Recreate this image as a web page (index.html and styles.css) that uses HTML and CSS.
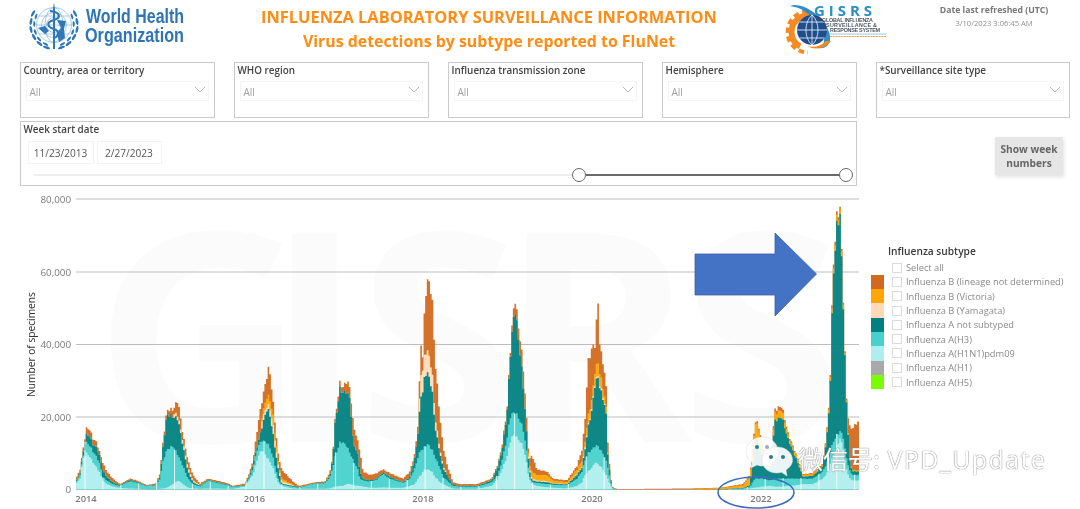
FILE: index.html
```html
<!DOCTYPE html>
<html lang="en">
<head>
<meta charset="utf-8">
<title>Influenza Laboratory Surveillance Information</title>
<link rel="stylesheet" href="styles.css">
</head>
<body>
<div class="page">
  <header class="header">
    <div class="who">
      <svg class="who-logo" width="172" height="52" viewBox="0 0 172 52">
        <g class="who-mark">
          <g id="wreath">
            <ellipse cx="18.5" cy="46.5" rx="1.3" ry="3.6" transform="rotate(-70 18.5 46.5)"/>
            <ellipse cx="11.5" cy="42.5" rx="1.3" ry="3.6" transform="rotate(-50 11.5 42.5)"/>
            <ellipse cx="6" cy="36" rx="1.3" ry="3.6" transform="rotate(-30 6 36)"/>
            <ellipse cx="3" cy="28.5" rx="1.3" ry="3.6" transform="rotate(-10 3 28.5)"/>
            <ellipse cx="3" cy="20.5" rx="1.3" ry="3.6" transform="rotate(10 3 20.5)"/>
            <ellipse cx="5" cy="12.5" rx="1.3" ry="3.6" transform="rotate(28 5 12.5)"/>
            <ellipse cx="17.5" cy="43" rx="1.1" ry="3" transform="rotate(-60 17.5 43)"/>
            <ellipse cx="11" cy="38" rx="1.1" ry="3" transform="rotate(-42 11 38)"/>
            <ellipse cx="7.3" cy="31" rx="1.1" ry="3" transform="rotate(-20 7.3 31)"/>
            <ellipse cx="6.3" cy="23" rx="1.1" ry="3" transform="rotate(0 6.3 23)"/>
            <ellipse cx="8" cy="15.5" rx="1.1" ry="3" transform="rotate(18 8 15.5)"/>
          </g>
          <use href="#wreath" transform="translate(52 0) scale(-1 1)"/>
          <g class="who-globe">
            <circle cx="26" cy="24" r="17.5"/>
            <circle cx="26" cy="24" r="12.5"/>
            <circle cx="26" cy="24" r="7.5"/>
            <ellipse cx="26" cy="24" rx="9" ry="17.5"/>
            <path d="M8.5 24H43.5M11 15H41M11 33H41"/>
          </g>
          <path d="M26 1.5L27 8V48H25V8Z"/>
          <path class="who-snake" d="M22 10C33 11 33 17 26 19C18 21 19 26 26 28C32 30 31 35 26 37"/>
          <path d="M10 27L17 25L21 30L17 33ZM29 19L38 20L36 28L37 37L31 41L29 32L33 27Z"/>
        </g>
        <text class="who-name" x="58" y="22" textLength="98" lengthAdjust="spacingAndGlyphs">World Health</text>
        <text class="who-name" x="57" y="41" textLength="99" lengthAdjust="spacingAndGlyphs">Organization</text>
      </svg>
    </div>
    <div class="titles">
      <h1 class="title">INFLUENZA LABORATORY SURVEILLANCE INFORMATION</h1>
      <h2 class="subtitle">Virus detections by subtype reported to FluNet</h2>
    </div>
    <div class="gisrs">
      <svg width="104" height="56" viewBox="0 0 104 56">
        <circle class="gear-ring" cx="24" cy="32" r="16.500"/>
        <circle class="gear-teeth" cx="24" cy="32" r="20.500"/>
        <path class="swoosh" d="M6 6C16 2 34 12 42 26C50 38 46 50 34 48C42 46 42 36 35 26C28 14 16 7 6 6Z"/>
        <circle class="globe" cx="28" cy="30" r="15"/>
        <path class="globe-grid" d="M13 30H43M15.500 22H40.500M15.500 38H40.500M28 15V45M28 15C20 22 20 38 28 45M28 15C36 22 36 38 28 45"/>
        <path class="gear" d="M23 46C30 48 37 46 42 41L47 41C42 48 32 51 23 46Z"/>
        <text class="gisrs-name" x="30" y="16" textLength="58">GISRS</text>
        <text class="gisrs-line" x="38" y="22" textLength="51">GLOBAL INFLUENZA</text>
        <text class="gisrs-line" x="42" y="27" textLength="51">SURVEILLANCE &amp;</text>
        <text class="gisrs-line" x="46" y="32" textLength="50">RESPONSE SYSTEM</text>
        <path class="gisrs-rule" d="M46 34H102"/>
        <path class="gisrs-tag" d="M46 36.500H102"/>
      </svg>
    </div>
    <div class="refresh">
      <div class="refresh-label">Date last refreshed (UTC)</div>
      <div class="refresh-value">3/10/2023 3:06:45 AM</div>
    </div>
  </header>

  <section class="filters">
    <div class="slicer"><div class="slicer-title">Country, area or territory</div><div class="select"><span>All</span><svg class="chev" width="12" height="7" viewBox="0 0 12 7"><path d="M1 1L6 6L11 1"/></svg></div></div>
    <div class="slicer"><div class="slicer-title">WHO region</div><div class="select"><span>All</span><svg class="chev" width="12" height="7" viewBox="0 0 12 7"><path d="M1 1L6 6L11 1"/></svg></div></div>
    <div class="slicer"><div class="slicer-title">Influenza transmission zone</div><div class="select"><span>All</span><svg class="chev" width="12" height="7" viewBox="0 0 12 7"><path d="M1 1L6 6L11 1"/></svg></div></div>
    <div class="slicer"><div class="slicer-title">Hemisphere</div><div class="select"><span>All</span><svg class="chev" width="12" height="7" viewBox="0 0 12 7"><path d="M1 1L6 6L11 1"/></svg></div></div>
    <div class="slicer"><div class="slicer-title">*Surveillance site type</div><div class="select"><span>All</span><svg class="chev" width="12" height="7" viewBox="0 0 12 7"><path d="M1 1L6 6L11 1"/></svg></div></div>
  </section>

  <section class="date-row">
    <div class="date-box">
      <div class="slicer-title">Week start date</div>
      <div class="dates">
        <div class="date">11/23/2013</div>
        <div class="date">2/27/2023</div>
      </div>
      <div class="slider">
        <div class="track-off"></div>
        <div class="knob"></div>
        <div class="track-on"></div>
        <div class="knob"></div>
      </div>
    </div>
    <button class="week-btn">Show week numbers</button>
  </section>

  <section class="chart-area">
    <svg id="chart" class="chart" width="868" height="319" viewBox="0 0 868 319">
      <text class="ghost" x="94 266 358 500 681" y="252">GISRS</text>
      <g class="grid">
        <path d="M76 9H859M76 82H859M76 154.500H859M76 227H859M76 299.500H859"/>
      </g>
      <g class="y-labels">
        <text x="71" y="12.500">80,000</text>
        <text x="71" y="85.500">60,000</text>
        <text x="71" y="158">40,000</text>
        <text x="71" y="230.500">20,000</text>
        <text x="71" y="303">0</text>
      </g>
      <text class="y-title" transform="translate(35 154.500) rotate(-90)">Number of specimens</text>
      <g id="bars" class="bars"></g>
      <g class="x-labels">
        <text x="86" y="312">2014</text>
        <text x="254.500" y="312">2016</text>
        <text x="423" y="312">2018</text>
        <text x="592" y="312">2020</text>
        <text x="761" y="312">2022</text>
      </g>
      <path class="arrow" d="M695 64H775V43L816.500 84L775 126V105H695Z"/>
      <ellipse class="ring" cx="756" cy="302.500" rx="38" ry="15.500"/>
    </svg>
    <aside class="legend">
      <div class="legend-title">Influenza subtype</div>
      <div class="legend-row"><i class="swatch"></i><i class="check"></i><span>Select all</span></div>
      <div class="legend-row"><i class="swatch c-bnd"></i><i class="check"></i><span>Influenza B (lineage not determined)</span></div>
      <div class="legend-row"><i class="swatch c-vic"></i><i class="check"></i><span>Influenza B (Victoria)</span></div>
      <div class="legend-row"><i class="swatch c-yam"></i><i class="check"></i><span>Influenza B (Yamagata)</span></div>
      <div class="legend-row"><i class="swatch c-ans"></i><i class="check"></i><span>Influenza A not subtyped</span></div>
      <div class="legend-row"><i class="swatch c-h3"></i><i class="check"></i><span>Influenza A(H3)</span></div>
      <div class="legend-row"><i class="swatch c-pdm"></i><i class="check"></i><span>Influenza A(H1N1)pdm09</span></div>
      <div class="legend-row"><i class="swatch c-h1"></i><i class="check"></i><span>Influenza A(H1)</span></div>
      <div class="legend-row"><i class="swatch c-h5"></i><i class="check"></i><span>Influenza A(H5)</span></div>
    </aside>
    <div class="wechat">
      <svg width="50" height="46" viewBox="0 0 50 46">
        <path class="bubble" d="M17 1C8 1 1 7.500 1 15.500C1 20 3.500 24 7 26.500L6 32L12 29C14 29.700 15.500 30 17 30C26 30 33 23.500 33 15.500C33 7.500 26 1 17 1Z"/>
        <path class="bubble2" d="M32 11C23 11 17 17 17 24C17 31 23 37 32 37C33.500 37 35 36.800 36.500 36.300L42 40L41 34C45 31.500 47.500 28 47.500 24C47.500 17 41 11 32 11Z"/>
        <circle class="eye" cx="12" cy="11" r="2"/>
        <circle class="eye-soft" cx="22" cy="11" r="2"/>
        <circle class="eye" cx="26" cy="21" r="2"/>
        <circle class="eye" cx="38" cy="21" r="2"/>
      </svg>
      <span class="wechat-text">微信号: <span class="wechat-id">VPD_Update</span></span>
    </div>
  </section>
</div>
<script src="chart.js"></script>
</body>
</html>
```
FILE: styles.css
```css
* { box-sizing: border-box; }
html, body { margin: 0; padding: 0; background: #fff; }
body { width: 1080px; height: 509px; overflow: hidden; font-family: "Open Sans", "Noto Sans", sans-serif; }
.page { width: 1080px; height: 509px; filter: blur(0.4px); }

.header { display: grid; grid-template-columns: 200px 578px 130px 172px; height: 62px; }
.who { padding: 1px 0 0 28px; }
.who-logo { display: block; overflow: visible; }
.who-mark { fill: #2f78b8; }
.who-globe { fill: none; stroke: #86b4dc; stroke-width: 0.7; }
.who-snake { fill: none; stroke: #2f78b8; stroke-width: 2.2; }
.who-name { font-family: "Liberation Sans", sans-serif; font-size: 19.500px; font-weight: 700; fill: #2e75b6; }

.titles { text-align: center; padding-top: 5px; color: #ff8c14; }
.title, .subtitle { margin: 0; font-weight: 700; line-height: 24px; white-space: nowrap; }
.title { font-size: 16.400px; }
.subtitle { font-size: 15.900px; }

.gisrs { padding: 0 0 0 6px; }
.gisrs svg { display: block; overflow: visible; }
.gear { fill: #f58a22; }
.gear-ring { fill: none; stroke: #f58a22; stroke-width: 6; stroke-dasharray: 62 42; stroke-dashoffset: -34; }
.gear-teeth { fill: none; stroke: #f58a22; stroke-width: 4; stroke-dasharray: 5.500 3.500; clip-path: inset(0 50% 0 0); }
.swoosh { fill: #2f8fc6; }
.globe { fill: #1f4e8c; }
.globe-grid { fill: none; stroke: #dfe9f5; stroke-width: 0.9; }
.gisrs-name { font-family: "Open Sans", sans-serif; font-weight: 700; font-size: 15px; fill: #2b8fc4; }
.gisrs-line { font-family: "Liberation Sans", sans-serif; font-size: 5.400px; font-weight: 700; fill: #4a5560; }
.gisrs-rule { stroke: #5aa5d2; stroke-width: 0.6; }
.gisrs-tag { stroke: #f58a22; stroke-width: 1.2; stroke-dasharray: 2 0.7; opacity: 0.8; }

.refresh { text-align: center; padding-top: 4px; }
.refresh-label { font-size: 8.700px; font-weight: 700; color: #777; line-height: 12px; }
.refresh-value { font-size: 7.600px; color: #8f8f8f; line-height: 14px; }

.filters { display: grid; grid-template-columns: repeat(4, 195px) 194px; column-gap: 19px; padding-left: 20px; height: 56px; }
.slicer, .date-box { border: 1.500px solid #cbcbcb; }
.slicer { padding: 0 5px 0 2.500px; }
.slicer-title { font-size: 9.900px; font-weight: 600; color: #444; line-height: 15px; }
.select { display: flex; align-items: center; justify-content: space-between; height: 20px; margin: 3px 0 0 2px; padding: 2px 2px 0 3px; border: 1px solid #f5f5f5; }
.select span { font-size: 10px; color: #a0a0a0; }
.chev { fill: none; stroke: #a8a8a8; stroke-width: 0.8; margin-top: -5px; }

.date-row { display: flex; justify-content: space-between; padding: 3px 17px 0 20px; height: 72px; }
.date-box { width: 837px; height: 65px; padding: 0 0 0 2.500px; }
.dates { display: flex; gap: 3px; margin: 4px 0 0 4px; }
.date { height: 23px; width: 66px; border: 1px solid #f3f3f3; font-size: 10.100px; color: #555; line-height: 22px; text-align: center; }
.date + .date { width: 65px; }
.slider { display: flex; align-items: center; height: 14px; margin: 4px 0 0 10px; }
.track-off { width: 538px; height: 1.500px; background: #eeeeee; }
.track-on { width: 253px; height: 2px; background: #6a6a6a; }
.knob { flex: none; width: 14px; height: 14px; border-radius: 50%; border: 1.500px solid #666; background: #fff; }
.week-btn { width: 68px; height: 38px; margin-top: 16px; border: 0; padding: 0 3px; background: #e6e6e6; box-shadow: 1px 2px 4px rgba(0,0,0,.12); font: 700 10.200px/14px "Open Sans", sans-serif; color: #666; }

.chart-area { position: relative; display: flex; height: 319px; }
.chart { flex: none; display: block; }
.ghost { font-family: "Open Sans", sans-serif; font-weight: 700; font-size: 292px; fill: #fbfbfb; }
.grid path { stroke: #bdbdbd; stroke-width: 1.200; fill: none; }
.y-labels text { font-size: 9.800px; fill: #7a7a7a; text-anchor: end; }
.x-labels text { font-size: 9.400px; fill: #7a7a7a; text-anchor: middle; font-weight: 600; }
.y-title { font-size: 10.200px; fill: #333; text-anchor: middle; }
.bars { opacity: 0.94; }
.arrow { fill: #4472c4; stroke: #3a62a8; stroke-width: 0.8; }
.ring { fill: none; stroke: #3f6dbe; stroke-width: 1.600; }

.legend { padding: 54px 0 0 3px; }
.legend-title { font-size: 10.200px; font-weight: 600; color: #3c3c3c; line-height: 14px; margin: 0 0 2.500px 17px; }
.legend-row { display: flex; align-items: center; height: 14.300px; }
.swatch { flex: none; width: 13px; height: 14.300px; margin-right: 8px; }
.check { flex: none; width: 10px; height: 10px; border: 1px solid #dcdcdc; margin-right: 4px; }
.legend-row span { font-size: 9.300px; color: #8a8a8a; white-space: nowrap; }
.c-bnd { background: #d2691e; }
.c-vic { background: #ffa500; }
.c-yam { background: #ffdab9; }
.c-ans { background: #008080; }
.c-h3 { background: #48d1cc; }
.c-pdm { background: #afeeee; }
.c-h1 { background: #a9a9a9; }
.c-h5 { background: #7cfc00; }

.wechat { position: absolute; left: 745px; top: 246px; display: flex; align-items: center; gap: 3px; }
.bubble { fill: #fff; fill-opacity: 0.9; stroke: #dcdcdc; stroke-width: 0.5; }
.bubble2 { fill: #fff; fill-opacity: 0.92; stroke: #dcdcdc; stroke-width: 0.5; }
.eye { fill: #2f7f80; }
.eye-soft { fill: #9ab; }
.wechat-text { font-family: "Noto Sans CJK SC", "Noto Sans", sans-serif; font-size: 25px; color: #fff; white-space: nowrap; text-shadow: 0 0 1px #777, 0 0 1px #777; margin-top: -3px; }
.wechat-id { font-family: "Noto Sans", sans-serif; letter-spacing: 1.300px; margin-left: 2px; }
```
FILE: chart.js
```js
// Cumulative stack tops in thousands of specimens: [x px, H1N1pdm, H3, A-not-subtyped, Yamagata, Victoria, total]
var K = [
[76,1.5,2,2.2,0,0,3],[80,3,4,4.5,0,0,5.5],[83,8.5,9,10,0,0,11],[86.7,10,13,15.3,0,0,17],[90,9,12,14.5,0,0,16.5],[93,7.5,10.5,12.5,0,0,14],[96.7,6,9,11.5,0,0,13],[100,4.5,7,9,0,0,10],[102.700,2.500,3.500,5.500,0,0,7.500],[106.700,1.500,2.500,3.500,0,0,5],[113,.8,1.5,2,0,0,3],[120,.4,1,1.2,0,0,1.5],[130,.3,2.3,2.6,0,0,3],[138,.2,1.8,2,0,0,2.4],[147,.1,.9,1,0,0,1.2],[156,.1,1.2,1.3,0,0,1.7],[160,.2,3,3.5,0,0,4.5],[163,.3,8,12,0,0,13],[167,.5,11,20.8,0,0,22],[173,1.5,12,20,21,0,22],[178,2.5,9.5,19.500,20.500,0,24.700],[183,1.5,6.5,12,13,0,15],[188,.5,3,5,6,0,8],[193,.3,1.5,2,2.5,0,4],[200,.2,.8,1,1.2,0,1.6],[208,.3,2.4,2.6,0,0,3],[227,.2,1.2,1.4,0,0,1.8],[233,.2,.7,.8,0,0,1],[245,.8,1.1,1.2,0,0,1.7],[250,3,3.5,4,0,0,5],[253,4,6,7,0,0,8],[258,9,12,13,0,0,18],[261.700,11,13.500,17,19,20,24],[266.700,9,13,22,23,25.500,31],[269.300,8,12,21.500,23,25.500,34],[273,6,9,15.500,18,21,24.500],[278,2,3,6,7,8,10],[281.700,1,1.400,1.600,2.200,3,5.500],[293,.3,.8,1,1.200,1.400,2.200],[298.700,.2,.5,.6,0,0,1],[315,.2,1.600,1.700,0,0,2],[325,.2,1.700,1.800,0,0,2.200],[330,.3,3.500,4,0,0,5],[332.700,.6,6,8.500,0,0,9],[335,.8,9,18,0,0,19],[340,1,13,28,0,0,29.500],[343,1,13,26.500,0,0,28],[346.700,1.500,12,27,0,0,30],[350,1.500,10,25,0,0,28],[353.300,1.200,8,13,0,0,18],[358,1,5.500,9.500,0,0,13],[360,1,3,5,0,0,10.500],[363,.8,2.500,3,0,0,5],[370,.5,2.200,2.500,0,0,4],[376.700,.5,2.700,3,0,0,4.500],[383,.6,4.300,4.800,0,0,5.600],[390,.5,3,3.500,0,0,4.500],[403,.5,1.800,2,0,0,3],[410,1,3,3.500,0,0,5],[415,1.500,6,9,0,0,10],[418,3,9,16,17,0,18],[421,4,11,26,32,0,40.500],[423,5,11,27,33,0,36],[425,5.500,12,32,38,0,53],[428,5.500,12.500,32,38,0,58],[432,5,11,28,33,0,54],[435,3.500,9,17.500,20,0,36],[440,2,6,10,11,0,20],[443,1.500,3.500,6,6.500,0,12],[447,1,2.500,4,4.300,0,7],[453,.3,1,1.300,0,0,2],[460,.2,.8,1,0,0,1.500],[477,.2,.8,1,0,0,1.500],[491.700,1,2,2.500,0,0,3],[498,3,4,6.500,0,0,7],[502,5.500,8,11,0,0,12],[507,9,14,21,0,0,22],[510,13,20,36,0,0,37],[513,15,21,46,0,0,48],[515,15,21.500,50,0,0,53],[518,14,20,43,0,0,46],[523,12,17,30,0,0,35],[527,7,10,14.500,15,16,18],[529,3,4,5.500,6,7,8],[532,1.500,2,2.500,3,5,9.500],[537,1,1.800,2.200,2.500,4,5.500],[547,.6,1.500,2,2.300,4,5],[553,.5,1.300,1.600,1.800,2.500,3],[567,.3,1.200,1.400,1.500,2,2.500],[577,1,3,4,4.200,5.500,6.500],[582,2,5,6,6.300,8,11],[585,4,8,11,11.500,13,19],[588,5,10,17,17.500,20,35],[592,6,11,22,22.500,25,39],[595,7.500,12,29,29.500,33,40],[598,7,12,31,31.500,35,52],[600,6.500,11,28,28.500,32,39],[603,5.500,10,25,25.500,28,35],[606,4,8,22,22.200,24,30],[608,3,6,9,9,9.500,12],[610.700,1,2,2.500,0,0,3],[613,.1,.2,.3,0,0,.5],[618,0,0,0,0,0,.1],[693,0,0,0,0,.2,.3],[720,0,0,.05,0,.4,.5],[743,.1,.3,.4,0,1.200,1.500],[750,.3,.8,1.200,0,3.500,4],[755,.5,3,14,0,18,18.500],[758,.6,3,14,0,18,18.500],[762,.8,3,10,0,12,12.500],[770,1,2.500,5,0,6,6.500],[775,.8,3,19,0,21,22],[782,.8,3,20,0,22,23],[788,1,3,14,0,15,15.500],[797,1.200,3,8,0,9,9.200],[803,1.500,3,3.500,0,4,4.200],[813,1.500,3,3.800,0,4.300,4.600],[823,3,5,6.500,0,7,7.200],[828,5,8,17.500,0,18.500,19],[830,7,10,27,0,28,28.500],[833,9,13,58,0,59.500,60.500],[837,12,15,73,0,74.500,75.500],[840,14,16,76,0,77.500,78],[843,12,15,54,0,55.500,56],[845,8,11,36,0,36.500,37],[847,5,8,21,0,21.500,22],[850,3,5,7,0,7.500,17],[853,2.500,4,5,0,5.300,17],[857,2.500,4,5,0,5.300,18.500],[859,2.500,4,5,0,5.300,18.500]
];

var BASE = 299.5, PER_K = 3.63, X0 = 76, BAR = 1.624, END = 859;
var NS = "http://www.w3.org/2000/svg";

function columnAt(x) {
  var i = 0;
  while (i < K.length - 2 && K[i + 1][0] < x) i++;
  var p = K[i], q = K[i + 1];
  var t = Math.max(0, Math.min(1, (x - p[0]) / (q[0] - p[0])));
  var out = [];
  for (var n = 1; n <= 6; n++) out.push(p[n] + (q[n] - p[n]) * t);
  // Zero means "no separate band": the layer sits on the one beneath it.
  var yam = p[4] && q[4] ? out[3] : out[2];
  var vic = p[5] && q[5] ? out[4] : yam;
  return [out[0], out[1], out[2], yam, Math.max(vic, yam), Math.max(out[5], vic, yam)];
}

var columns = [];
for (var x = X0; x < END; x += BAR) {
  var c = columnAt(x + BAR / 2);
  var j = 1 + 0.025 * Math.sin(columns.length * 2.3);
  columns.push({ x: x, v: c.map(function (h) { return h * j; }) });
}

function areaPath(layer) {
  var d = "M" + X0 + " " + BASE;
  columns.forEach(function (col) {
    var y = (BASE - col.v[layer] * PER_K).toFixed(2);
    d += "V" + y + "H" + Math.min(col.x + BAR, END).toFixed(2);
  });
  return d + "V" + BASE + "Z";
}

var bars = document.getElementById("bars");
["#d2691e", "#ffa500", "#ffdab9", "#008080", "#48d1cc", "#afeeee"].forEach(function (fill, i) {
  var p = document.createElementNS(NS, "path");
  p.setAttribute("d", areaPath(5 - i));
  p.setAttribute("fill", fill);
  bars.appendChild(p);
});

// Pale vertical gaps every eleven weeks through the lower bands.
for (var g = 85; g < END; g += 17.9) {
  var col = columns[Math.round((g - X0) / BAR)];
  if (!col) continue;
  var line = document.createElementNS(NS, "path");
  line.setAttribute("d", "M" + g.toFixed(1) + " " + BASE + "V" + (BASE - col.v[1] * PER_K).toFixed(1));
  line.setAttribute("stroke", "#fff");
  line.setAttribute("stroke-opacity", "0.85");
  line.setAttribute("stroke-width", "1");
  bars.appendChild(line);
}
```
